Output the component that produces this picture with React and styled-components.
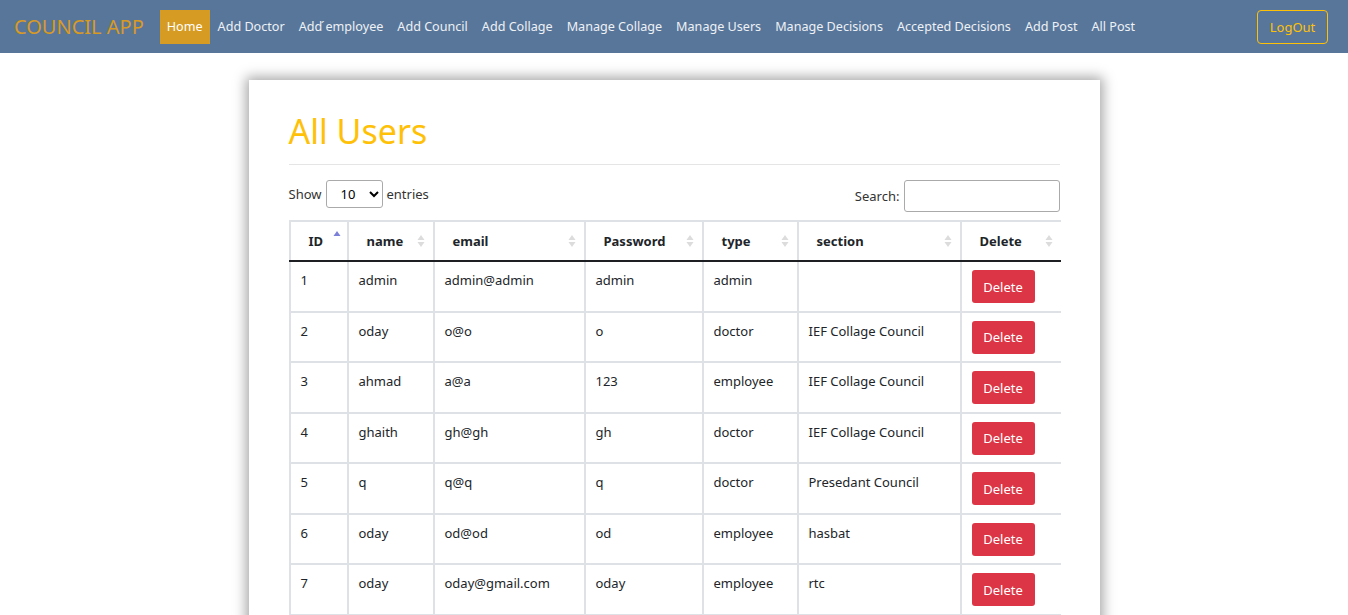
import React from "react";
import styled, { createGlobalStyle } from "styled-components";

const GlobalStyle = createGlobalStyle`
  body {
    margin: 0;
    background: #ffffff;
    font-family: "Segoe UI", "Noto Sans", "Open Sans", sans-serif;
    color: #212529;
  }
  * { box-sizing: border-box; }
`;

// nav items
const links = [
  "Home",
  "Add Doctor",
  "Add \u0301employee",
  "Add Council",
  "Add Collage",
  "Manage Collage",
  "Manage Users",
  "Manage Decisions",
  "Accepted Decisions",
  "Add Post",
  "All Post",
];

const columns = [
  { title: "ID", width: 58, sort: "asc" },
  { title: "name", width: 86 },
  { title: "email", width: 151 },
  { title: "Password", width: 118 },
  { title: "type", width: 95 },
  { title: "section", width: 163 },
  { title: "Delete", width: 100 },
];

const users = [
  { id: 1, name: "admin", email: "admin@admin", password: "admin", type: "admin", section: "" },
  { id: 2, name: "oday", email: "o@o", password: "o", type: "doctor", section: "IEF Collage Council" },
  { id: 3, name: "ahmad", email: "a@a", password: "123", type: "employee", section: "IEF Collage Council" },
  { id: 4, name: "ghaith", email: "gh@gh", password: "gh", type: "doctor", section: "IEF Collage Council" },
  { id: 5, name: "q", email: "q@q", password: "q", type: "doctor", section: "Presedant Council" },
  { id: 6, name: "oday", email: "od@od", password: "od", type: "employee", section: "hasbat" },
  { id: 7, name: "oday", email: "oday@gmail.com", password: "oday", type: "employee", section: "rtc" },
];

const SortIcon = ({ dir }) => (
  <svg width="8" height="14" viewBox="0 0 8 14">
    <polygon
      points="4,1 7.5,6 0.5,6"
      fill={dir === "asc" ? "#7b80d9" : "#dcdcdc"}
    />
    {dir !== "asc" && <polygon points="0.5,8 7.5,8 4,13" fill="#dcdcdc" />}
  </svg>
);

const Users = () => {
  return (
    <>
      <GlobalStyle />
      <Navbar>
        <Brand>COUNCIL APP</Brand>
        <NavList>
          {links.map((l, i) => (
            <NavLink key={l} active={i === 0}>
              {l}
            </NavLink>
          ))}
        </NavList>
        <LogoutButton>LogOut</LogoutButton>
      </Navbar>
      <Main>
        <Card>
          <Title>All Users</Title>
          <Divider />
          <Controls>
            <Label>
              Show
              <Select defaultValue="10">
                <option>10</option>
                <option>25</option>
                <option>50</option>
                <option>100</option>
              </Select>
              entries
            </Label>
            <Label>
              Search:
              <SearchInput type="search" />
            </Label>
          </Controls>
          <Table>
            <colgroup>
              {columns.map((c) => (
                <col key={c.title} style={{ width: c.width }} />
              ))}
            </colgroup>
            <thead>
              <tr>
                {columns.map((c) => (
                  <Th key={c.title} last={c.title === "Delete"}>
                    <HeadInner>
                      {c.title}
                      <SortSlot top={c.sort === "asc"}>
                        <SortIcon dir={c.sort} />
                      </SortSlot>
                    </HeadInner>
                  </Th>
                ))}
              </tr>
            </thead>
            <tbody>
              {users.map((u) => (
                <tr key={u.id}>
                  <Td>{u.id}</Td>
                  <Td>{u.name}</Td>
                  <Td>{u.email}</Td>
                  <Td>{u.password}</Td>
                  <Td>{u.type}</Td>
                  <Td>{u.section}</Td>
                  <Td last>
                    <DeleteButton>Delete</DeleteButton>
                  </Td>
                </tr>
              ))}
            </tbody>
          </Table>
        </Card>
      </Main>
    </>
  );
};

const Navbar = styled.nav`
  height: 53px;
  background: #58769a;
  display: flex;
  align-items: center;
  padding: 0 20px 0 14px;
`;

const Brand = styled.div`
  font-size: 20px;
  color: #d99a22;
  margin-right: 16px;
  white-space: nowrap;
`;

const NavList = styled.ul`
  display: flex;
  align-items: center;
  list-style: none;
  margin: 0;
  padding: 0;
  flex: 1;
`;

const NavLink = styled.li`
  font-size: 12.6px;
  height: 34px;
  line-height: 34px;
  white-space: nowrap;
  color: ${(p) => (p.active ? "#ffffff" : "#eef1f5")};
  background: ${(p) => (p.active ? "#d69b23" : "transparent")};
  padding: ${(p) => (p.active ? "0 7px" : "0 7px")};
  margin-right: ${(p) => (p.active ? "1px" : "0")};
`;

const LogoutButton = styled.button`
  font-family: inherit;
  font-size: 13px;
  color: #ffc107;
  background: transparent;
  border: 1px solid #ffc107;
  border-radius: 4px;
  height: 34px;
  width: 71px;
`;

const Main = styled.main`
  display: flex;
  justify-content: center;
  padding-top: 27px;
`;

const Card = styled.section`
  width: 851px;
  min-height: 560px;
  background: #ffffff;
  padding: 28px 40px 40px;
  box-shadow: 0 0 12px 3px rgba(0, 0, 0, 0.35);
`;

const Title = styled.h1`
  margin: 0;
  font-size: 34px;
  font-weight: 400;
  line-height: 46px;
  color: #ffc107;
`;

const Divider = styled.hr`
  border: 0;
  border-top: 1px solid #e5e5e5;
  margin: 10px 0 15px;
`;

const Controls = styled.div`
  display: flex;
  justify-content: space-between;
  align-items: flex-start;
  margin-bottom: 8px;
`;

const Label = styled.label`
  display: flex;
  align-items: center;
  gap: 4px;
  font-size: 13px;
  color: #333;
  min-height: 32px;
  &:first-child {
    min-height: 28px;
  }
`;

const Select = styled.select`
  width: 57px;
  height: 28px;
  font-family: inherit;
  font-size: 13px;
  border: 1px solid #aaa;
  border-radius: 3px;
  padding: 0 4px 0 10px;
  background: #fff;
`;

const SearchInput = styled.input`
  width: 156px;
  height: 32px;
  border: 1px solid #aaa;
  border-radius: 3px;
  margin-left: 0;
`;

const Table = styled.table`
  width: 771px;
  border-collapse: collapse;
  table-layout: fixed;
  font-size: 13px;
`;

const Th = styled.th`
  text-align: left;
  font-weight: 700;
  height: 40px;
  padding: 0 8px 0 18px;
  border: 2px solid #dee2e6;
  border-bottom: 2px solid #1d1f22;
  border-right: ${(p) => (p.last ? "none" : "2px solid #dee2e6")};
`;

const HeadInner = styled.div`
  display: flex;
  justify-content: space-between;
  align-items: center;
`;

const SortSlot = styled.span`
  display: flex;
  align-self: ${(p) => (p.top ? "flex-start" : "center")};
  margin-top: ${(p) => (p.top ? "-2px" : "0")};
  margin-right: ${(p) => (p.top ? "-2px" : "0")};
`;

const Td = styled.td`
  vertical-align: top;
  padding: ${(p) => (p.last ? "8px 10px 7.5px" : "8px 10px")};
  border: 2px solid #dee2e6;
  border-right: ${(p) => (p.last ? "none" : "2px solid #dee2e6")};
  color: #212529;
  line-height: 20px;
`;

const DeleteButton = styled.button`
  font-family: inherit;
  font-size: 13px;
  color: #ffffff;
  background: #dc3545;
  border: none;
  border-radius: 3px;
  width: 63px;
  height: 33px;
  display: block;
`;

export default Users;
